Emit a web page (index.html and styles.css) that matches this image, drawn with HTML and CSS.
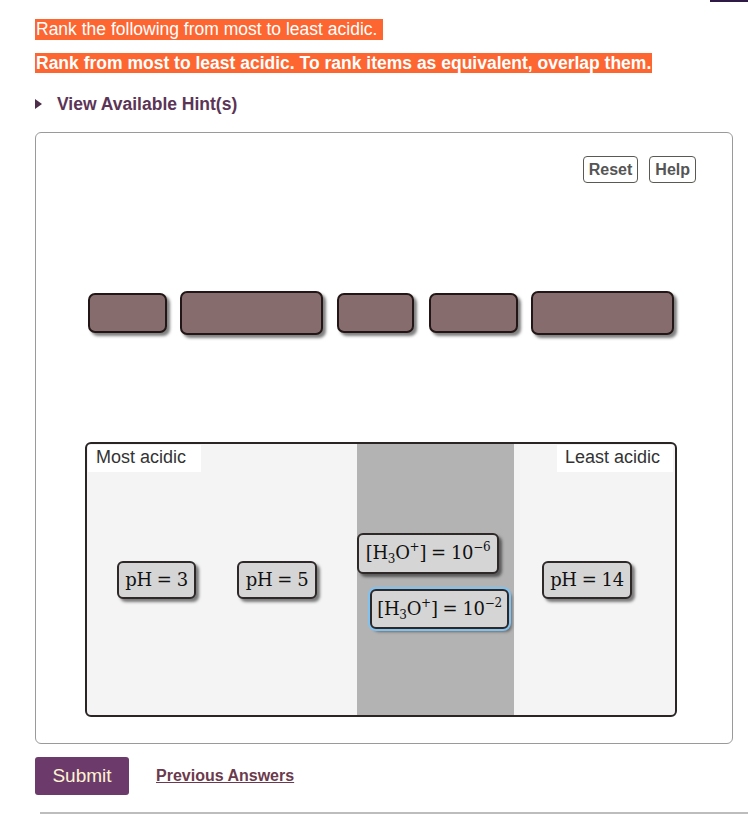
FILE: index.html
```html
<!DOCTYPE html>
<html lang="en">
<head>
<meta charset="utf-8">
<title>Rank acidity</title>
<link rel="stylesheet" href="styles.css">
</head>
<body>
<div class="topbar"><span class="tab"></span></div>
<main class="page">
  <p class="q q1"><span class="hl">Rank the following from most to least acidic.&nbsp;</span></p>
  <p class="q q2"><span class="hl">Rank from most to least acidic. To rank items as equivalent, overlap them.</span></p>
  <div class="hint"><span class="tri"></span><span>View Available Hint(s)</span></div>

  <section class="box">
    <div class="tools">
      <button class="tbtn">Reset</button>
      <button class="tbtn">Help</button>
    </div>

    <div class="slots">
      <div class="slot s1"></div>
      <div class="slot s2"></div>
      <div class="slot s3"></div>
      <div class="slot s4"></div>
      <div class="slot s5"></div>
    </div>

    <div class="rank">
      <div class="col cola">
        <span class="lbl lbl-left">Most acidic</span>
        <div class="chip c-ph3"><span class="m">pH<span class="eq">=</span>3</span></div>
        <div class="chip c-ph5"><span class="m">pH<span class="eq">=</span>5</span></div>
      </div>
      <div class="col colb">
        <div class="stack">
          <div class="chip c-h6"><span class="m">[H<sub>3</sub>O<sup>+</sup>]<span class="eq">=</span>10<sup>−6</sup></span></div>
          <div class="chip c-h2 sel"><span class="m">[H<sub>3</sub>O<sup>+</sup>]<span class="eq">=</span>10<sup>−2</sup></span></div>
        </div>
      </div>
      <div class="col colc">
        <span class="lbl lbl-right">Least acidic</span>
        <div class="chip c-ph14"><span class="m">pH<span class="eq">=</span>14</span></div>
      </div>
    </div>
  </section>

  <div class="actions">
    <button class="submit">Submit</button>
    <a class="prev" href="#">Previous Answers</a>
  </div>
  <hr class="rule">
</main>
</body>
</html>
```
FILE: styles.css
```css
* { box-sizing: border-box; }
html, body { margin: 0; padding: 0; background: #fff; }
body { font-family: "Liberation Sans", Arial, sans-serif; color: #333; width: 748px; height: 815px; overflow: hidden; }

.topbar { display: flex; justify-content: flex-end; height: 3px; }
.tab { width: 38px; height: 2px; background: #2e1a44; }

.page { padding-left: 35px; }

.q { margin: 0; font-size: 17.5px; }
.q .hl { display: inline-block; vertical-align: top; background: #fd6631; color: #fff; padding: 0 1px; }
.q1 { margin-top: 16px; height: 21px; line-height: 21px; }
.q1 .hl { line-height: 21px; }
.q2 { margin-top: 13px; height: 20px; line-height: 20px; font-weight: bold; }
.q2 .hl { line-height: 20px; }

.hint { margin-top: 21px; display: flex; align-items: center; height: 20px; font-weight: bold; font-size: 17.5px; color: #5b3456; }
.tri { width: 0; height: 0; border-left: 7px solid #4d2d4a; border-top: 5px solid transparent; border-bottom: 5px solid transparent; margin-right: 15px; }

.box { margin-top: 18px; width: 698px; height: 612px; border: 1px solid #9a9a9a; border-radius: 6px; }

.tools { display: flex; justify-content: flex-end; gap: 11px; padding: 23px 36px 0 0; }
.tbtn { height: 27px; padding: 0 5px; background: #fff; border: 1px solid #5a5a52; border-radius: 4px; font-family: "Liberation Sans", Arial, sans-serif; font-weight: bold; font-size: 16px; color: #555; }

.slots { display: flex; align-items: center; margin-top: 108px; padding-left: 52px; height: 44px; }
.slot { height: 40px; background: #866c6c; border: 2px solid #221616; border-radius: 7px; box-shadow: 3px 3px 3px rgba(0,0,0,0.5); }
.s1 { width: 79px; }
.s2 { width: 143px; height: 44px; margin-left: 13px; }
.s3 { width: 77px; margin-left: 14px; }
.s4 { width: 89px; margin-left: 15px; }
.s5 { width: 143px; height: 44px; margin-left: 13px; }

.rank { margin: 107px 0 0 49px; width: 592px; height: 275px; border: 2px solid #2b2424; border-radius: 6px; background: #f4f4f4; display: flex; }
.col { position: relative; height: 100%; display: flex; align-items: center; }
.cola { width: 270px; padding-left: 30px; gap: 41px; }
.colb { width: 157px; background: #b3b3b3; }
.colc { width: 161px; padding-left: 28px; }

.lbl { position: absolute; top: 1px; height: 27px; background: #fff; font-size: 18px; line-height: 25px; color: #333; }
.lbl-left { left: 1px; width: 113px; padding-left: 8px; }
.lbl-right { right: 2px; width: 116px; padding-left: 8px; }

.chip { height: 38px; display: flex; align-items: center; justify-content: center; background: #d5d5d5; border: 2px solid #2e2828; border-radius: 6px; box-shadow: 3px 3px 3px rgba(0,0,0,0.5); color: #111; white-space: nowrap; }
.m { display: block; font-family: "DejaVu Serif", "Liberation Serif", serif; font-size: 18px; line-height: 20px; letter-spacing: -0.3px; }
.m sub { font-size: 12px; vertical-align: -4px; line-height: 0; }
.m sup { font-size: 12px; vertical-align: 8px; line-height: 0; }
.eq { margin: 0 5px; }
.c-ph3 { width: 79px; }
.c-ph5 { width: 80px; }
.c-ph14 { width: 90px; }

.stack { display: flex; flex-direction: column; align-items: flex-start; margin-top: 2px; }
.c-h6 { width: 142px; height: 41px; }
.c-h2 { width: 139px; height: 40px; margin: 15px 0 0 13px; }
.sel { box-shadow: 0 0 0 2px #80c2f0, 3px 3px 3px rgba(0,0,0,0.4); }

.actions { display: flex; align-items: center; margin-top: 13px; gap: 27px; }
.submit { width: 94px; height: 38px; background: #6d3b6b; color: #fff4d2; border: none; border-radius: 3px; font-family: "Liberation Sans", Arial, sans-serif; font-size: 19px; }
.prev { font-weight: bold; font-size: 16px; color: #6b3a4c; text-decoration: underline; }

.rule { margin: 17px 0 0 5px; border: none; border-top: 2px solid #bdbdbd; height: 0; }
```
